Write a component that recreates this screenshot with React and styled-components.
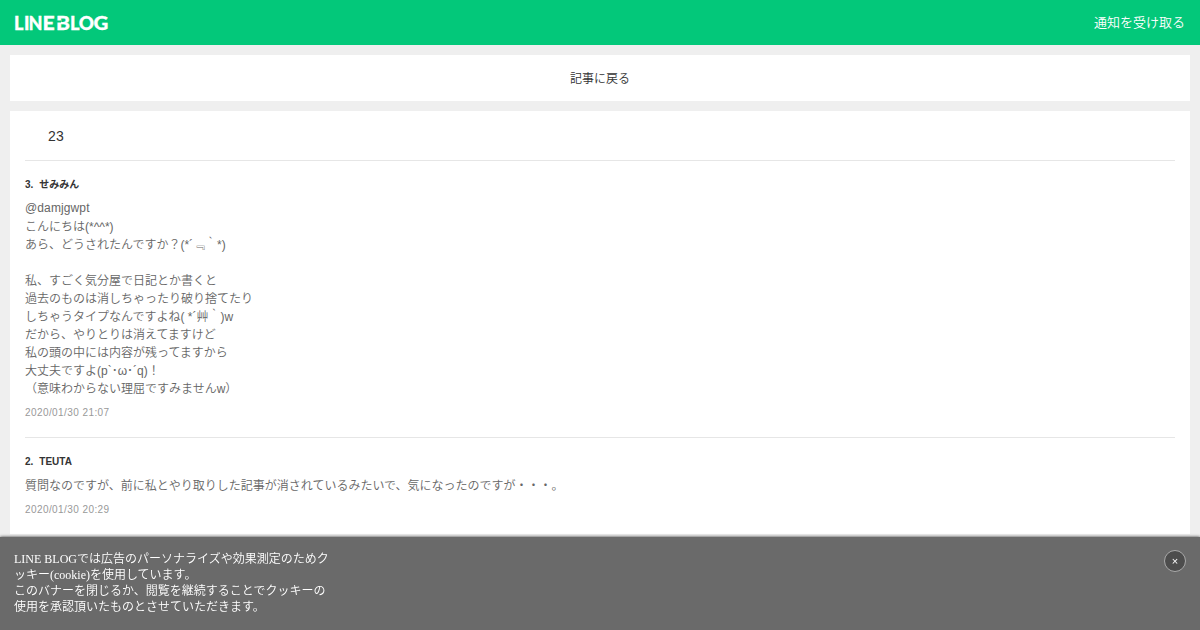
import React from 'react'
import styled, { createGlobalStyle } from 'styled-components';

const comments = [
  {
    id: 3,
    name: 'せみみん',
    date: '2020/01/30 21:07',
    replyTo: '@damjgwpt',
    body: `
こんにちは(*^^*)
あら、どうされたんですか？(*´﹃｀*)

私、すごく気分屋で日記とか書くと
過去のものは消しちゃったり破り捨てたり
しちゃうタイプなんですよね( *´艸｀)w
だから、やりとりは消えてますけど
私の頭の中には内容が残ってますから
大丈夫ですよ(p\`･ω･´q)！
（意味わからない理屈ですみませんw）`,
  },
  {
    id: 2,
    name: 'TEUTA',
    date: '2020/01/30 20:29',
    body: '質問なのですが、前に私とやり取りした記事が消されているみたいで、気になったのですが・・・。',
  },
];

const logoLetters = [
  { char: 'L', x: -1, width: 9.5 },
  { char: 'I', x: 9, width: 5.5 },
  { char: 'N', x: 13.6, width: 14 },
  { char: 'E', x: 27.5, width: 12.2 },
  { char: 'B', x: 41, width: 14 },
  { char: 'L', x: 55, width: 9.5 },
  { char: 'O', x: 63.8, width: 15.2 },
  { char: 'G', x: 78.6, width: 14.8 },
];

const Logo = () => (
  <LogoSvg viewBox="0 0 96 20" role="img" aria-label="LINE BLOG">
    {logoLetters.map(({ char, x, width }) => (
      <text key={x} x={x} y="17" textLength={width} lengthAdjust="spacingAndGlyphs">{char}</text>
    ))}
    <rect x="42" y="7.5" width="4" height="2" />
  </LogoSvg>
);

const Comment = ({ id, name, replyTo, body, date }) => (
  <CommentItem>
    <CommentName><span>{id}.</span>{name}</CommentName>
    <CommentBody>{replyTo && <Mention>{replyTo}</Mention>}{body}</CommentBody>
    <CommentDate>{date}</CommentDate>
  </CommentItem>
);

const App = () => {
  return (
    <>
      <GlobalStyle />
      <Header>
        <Logo />
        <HeaderLink>通知を受け取る</HeaderLink>
      </Header>
      <Main>
        <BackLink>記事に戻る</BackLink>
        <CommentPanel>
          <CommentCount>23</CommentCount>
          {comments.map((comment) => (
            <Comment key={comment.id} {...comment} />
          ))}
        </CommentPanel>
      </Main>
      <CookieBanner>
        <CookieText>
          LINE BLOGでは広告のパーソナライズや効果測定のためクッキー(cookie)を使用しています。<br />
          このバナーを閉じるか、閲覧を継続することでクッキーの使用を承認頂いたものとさせていただきます。
        </CookieText>
        <CloseButton>×</CloseButton>
      </CookieBanner>
    </>
  )
}

const GlobalStyle = createGlobalStyle`
  * {
    box-sizing: border-box;
  }
  body {
    margin: 0;
    height: 100vh;
    overflow: hidden;
    background: #efefef;
    color: #333;
    font-family: "Liberation Sans", "Noto Sans CJK JP", sans-serif;
    font-weight: 350;
    text-spacing-trim: space-all;
  }
`;

const Header = styled.header`
  display: flex;
  align-items: center;
  justify-content: space-between;
  height: 45px;
  padding: 0 15px;
  background: #03c87a;
  color: #fff;
`;

const LogoSvg = styled.svg`
  width: 96px;
  height: 20px;
  overflow: visible;

  text {
    fill: #fff;
    stroke: #fff;
    stroke-width: 0.3px;
    font-family: Lato, sans-serif;
    font-size: 19px;
    font-weight: 900;
  }
  rect {
    fill: #03c87a;
  }
`;

const HeaderLink = styled.a`
  padding-bottom: 2px;
  font-size: 13px;
`;

const Main = styled.main`
  display: flex;
  flex-direction: column;
  gap: 10px;
  padding: 10px;
`;

const BackLink = styled.a`
  height: 46px;
  background: #fff;
  font-size: 12px;
  line-height: 48px;
  text-align: center;
`;

const CommentPanel = styled.section`
  padding: 0 15px;
  background: #fff;
`;

const CommentCount = styled.h2`
  height: 49px;
  margin: 0;
  padding-left: 23px;
  font-size: 14px;
  font-weight: normal;
  letter-spacing: 0.2px;
  line-height: 50px;
`;

const CommentItem = styled.article`
  padding: 16px 0 17px;
  border-top: 1px solid #e6e6e6;
`;

const CommentName = styled.h3`
  margin: 0 0 8px;
  font-size: 10px;
  line-height: 15px;

  span {
    margin-right: 6px;
  }
`;

const CommentBody = styled.p`
  margin: 0 0 7px;
  color: #666;
  font-size: 12px;
  line-height: 18px;
  white-space: pre-wrap;
`;

const Mention = styled.span`
  letter-spacing: 0.12px;
  line-height: 1;
  vertical-align: 1px;
`;

const CommentDate = styled.p`
  margin: 0;
  color: #999;
  font-size: 10px;
  letter-spacing: 0.42px;
  line-height: 15px;
`;

const CookieBanner = styled.aside`
  position: fixed;
  right: 0;
  bottom: 0;
  left: 0;
  display: flex;
  align-items: flex-start;
  justify-content: space-between;
  height: 93px;
  padding: 13px 14px;
  background: #6a6a6a;
  box-shadow: 0 0 3px rgba(0, 0, 0, 0.8);
  color: #fff;
`;

const CookieText = styled.p`
  width: 316px;
  margin: 0;
  padding-top: 1px;
  font-family: "Liberation Serif", "Noto Sans CJK JP", serif;
  font-size: 12px;
  line-height: 16px;
`;

const CloseButton = styled.button`
  width: 22px;
  height: 22px;
  padding: 0;
  border: 1px solid #aaa;
  border-radius: 50%;
  background: #4d4d4d;
  color: #fff;
  font-family: "Liberation Sans", sans-serif;
  font-size: 11px;
  line-height: 20px;
`;

export default App
